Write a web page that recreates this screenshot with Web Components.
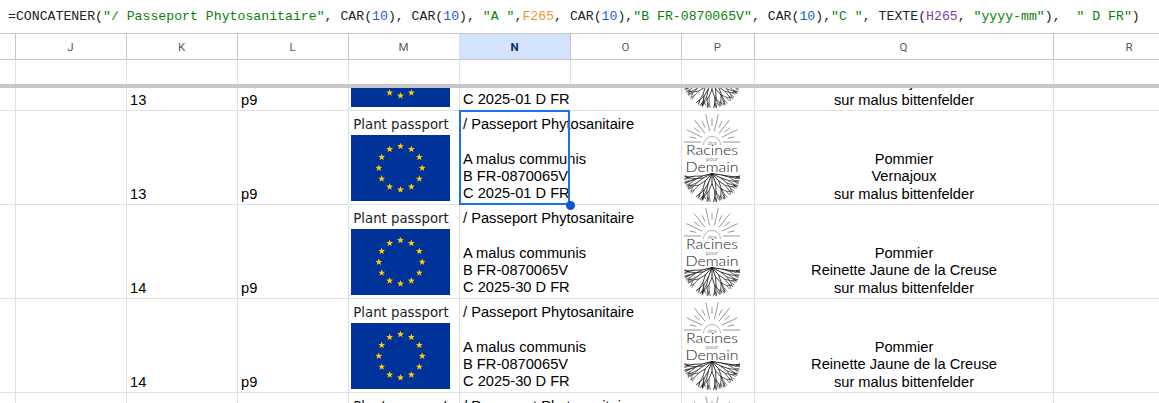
<!DOCTYPE html>
<html lang="fr">
<head>
<meta charset="utf-8">
<title>Feuille</title>
<style>
  html, body { margin: 0; height: 403px; overflow: hidden; background: #fff; }
</style>
</head>
<body>
<sheet-app></sheet-app>

<script>
const COLS = '15px 111px 111px 111px 111px 111px 111px 73px 299px 152px';
const LINE = '#e1e1e1';

// barre de formule
class FormulaBar extends HTMLElement {
    constructor() {
        super();
        this.attachShadow({mode: 'open'}).innerHTML = `
        <style>
        :host {
            display: flex;
            align-items: center;
            height: 33px;
            padding: 0 0 0 8px;
            border-bottom: 1px solid #c7c7c7;
            font: 13.2px "Liberation Mono", monospace;
            color: #202124;
            white-space: pre;
            overflow: hidden;
        }
        .s { color: #0a7f0a; }
        .n { color: #1a5fd0; }
        .o { color: #f6962b; }
        .p { color: #7e3f98; }
        </style>
        <span>=CONCATENER(<span class="s">"/ Passeport Phytosanitaire"</span>, CAR(<span class="n">10</span>), CAR(<span class="n">10</span>), <span class="s">"A "</span>,<span class="o">F265</span>, CAR(<span class="n">10</span>),<span class="s">"B FR-0870065V"</span>, CAR(<span class="n">10</span>),<span class="s">"C "</span>, TEXTE(<span class="p">H265</span>, <span class="s">"yyyy-mm"</span>),  <span class="s">" D FR"</span>)</span>
        `;
    }
}

// en-tête des colonnes + ligne figée vide + barre de gel
class SheetHeader extends HTMLElement {
    constructor() {
        super();
        const letters = ['', 'J', 'K', 'L', 'M', 'N', 'O', 'P', 'Q', 'R'];
        const heads = letters.map(l => `<div class="h ${l === 'N' ? 'sel' : ''}">${l}</div>`).join('');
        const blanks = letters.map(() => '<div class="b"></div>').join('');
        this.attachShadow({mode: 'open'}).innerHTML = `
        <style>
        :host { display: block; }
        .g { display: grid; grid-template-columns: ${COLS}; }
        .h {
            height: 24px;
            padding-top: 1px;
            display: flex;
            align-items: center;
            justify-content: center;
            border-right: 1px solid #c7c7c7;
            border-bottom: 1px solid #c7c7c7;
            margin-right: -1px;
            font: 11.5px Roboto, "Liberation Sans", sans-serif;
            color: #575b5f;
        }
        .h.sel { background: #d3e3fd; color: #0b2c5f; font-weight: 700; }
        .b {
            height: 24px;
            border-right: 1px solid ${LINE};
            margin-right: -1px;
        }
        .freeze { height: 4px; background: #c7c7c7; }
        </style>
        <div class="g">${heads}</div>
        <div class="g">${blanks}</div>
        <div class="freeze"></div>
        `;
    }
}

class EuFlag extends HTMLElement {
    constructor() {
        super();
        let stars = '';
        for (let i = 0; i < 12; i++) {
            const a = i * Math.PI / 6;
            const cx = 49.5 + 21.7 * Math.sin(a);
            const cy = 33 - 21.7 * Math.cos(a);
            let pts = [];
            for (let j = 0; j < 10; j++) {
                const r = j % 2 ? 1.5 : 3.6;
                const t = j * Math.PI / 5;
                pts.push((cx + r * Math.sin(t)).toFixed(2) + ',' + (cy - r * Math.cos(t)).toFixed(2));
            }
            stars += `<polygon points="${pts.join(' ')}" fill="#ffcc00"/>`;
        }
        this.attachShadow({mode: 'open'}).innerHTML = `
        <style>:host { display: block; width: 99px; height: 66px; } svg { display: block; }</style>
        <svg width="99" height="66" viewBox="0 0 99 66"><rect width="99" height="66" fill="#003399"/>${stars}</svg>
        `;
    }
}

// logo : soleil en haut, racines en bas, texte au milieu
class RacinesLogo extends HTMLElement {
    constructor() {
        super();
        let rays = '';
        const cx = 28, cy = 29;
        for (let i = 0; i <= 14; i++) {
            const a = -Math.PI / 2 + (i - 7) * (Math.PI / 14);
            const r0 = 11 + (i % 2) * 5;
            const r1 = i % 2 ? 23 : 28.5;
            rays += `<line x1="${(cx + r0 * Math.cos(a)).toFixed(1)}" y1="${(cy + r0 * Math.sin(a)).toFixed(1)}" x2="${(cx + r1 * Math.cos(a)).toFixed(1)}" y2="${(cy + r1 * Math.sin(a)).toFixed(1)}"/>`;
        }

        // racines : chaque branche se divise, avec un petit aléa fixe
        let seed = 11;
        const rnd = () => {
            seed = (seed * 16807) % 2147483647;
            return seed / 2147483647;
        };
        let roots = '';
        const branch = (x, y, ang, len, depth) => {
            const ex = x + len * 1.05 * Math.cos(ang);
            let ey = y + len * 1.06 * Math.sin(ang);
            // rien au-dessus du mot Demain
            if (ey < 62) ey = 62 + rnd() * 4;
            const w = [0.55, 0.65, 0.8, 0.9][depth];
            roots += `<line x1="${x.toFixed(1)}" y1="${y.toFixed(1)}" x2="${ex.toFixed(1)}" y2="${ey.toFixed(1)}" stroke-width="${w}"/>`;
            if (depth > 0) {
                branch(ex, ey, ang - 0.12 - rnd() * 0.3, len * 0.8, depth - 1);
                branch(ex, ey, ang + 0.12 + rnd() * 0.3, len * 0.8, depth - 1);
            }
        };
        for (let i = 0; i <= 8; i++) {
            const a = 0.1 + (Math.PI - 0.2) * (i / 8);
            branch(28, 60.5, a, 9.3, 3);
        }

        this.attachShadow({mode: 'open'}).innerHTML = `
        <style>
        :host { display: block; width: 56px; height: 90px; }
        svg { display: block; overflow: hidden; }
        .rays line { stroke: #444; stroke-width: .55; }
        .roots line { stroke: #111; }
        text { font-family: Lato, "Open Sans", sans-serif; font-weight: 300; fill: #222; text-anchor: middle; }
        </style>
        <svg width="56" height="90" viewBox="0 0 56 90">
            <g class="rays">${rays}</g>
            <path d="M19.5 32a8.5 8.5 0 0 1 17 0" fill="#fff" stroke="#666" stroke-width=".5"/>
            <text x="28" y="32" font-size="6">des</text>
            <text x="28" y="42" font-size="14" textLength="52" lengthAdjust="spacingAndGlyphs">Racines</text>
            <text x="28" y="48" font-size="6">pour</text>
            <text x="28" y="58.5" font-size="14" textLength="53" lengthAdjust="spacingAndGlyphs">Demain</text>
            <g class="roots">${roots}</g>
        </svg>
        `;
    }
}

// une ligne de données (hauteur fixe 94px)
class SheetRow extends HTMLElement {
    constructor() {
        super();
        const lot = this.getAttribute('lot');
        const date = this.getAttribute('date');
        const name = this.getAttribute('name');
        this.attachShadow({mode: 'open'}).innerHTML = `
        <style>
        :host {
            display: grid;
            grid-template-columns: ${COLS};
            height: 94px;
            font: 14.67px/17.3px "Liberation Sans", Arial, sans-serif;
            color: #000;
            box-sizing: border-box;
            border-bottom: 1px solid ${LINE};
        }
        .c {
            border-right: 1px solid ${LINE};
            margin-right: -1px;
            min-width: 0;
            display: flex;
            flex-direction: column;
            justify-content: flex-end;
            padding: 0 3px 1px 4px;
        }
        .m { padding: 0 0 3px 3px; align-items: flex-start; }
        .pp {
            width: 98px;
            padding-left: 1px;
            margin-bottom: 1px;
            text-align: center;
            font: 13.3px/19px "DejaVu Sans", sans-serif;
            color: #222;
            white-space: nowrap;
        }
        .n {
            justify-content: flex-start;
            padding-top: 5px;
            white-space: pre;
            border-right: 0;
            margin-right: 0;
            overflow: visible;
        }
        .p { padding: 2px 0 0 3px; justify-content: flex-start; }
        .q { align-items: center; text-align: center; padding-bottom: 1px; }
        </style>
        <div class="c"></div>
        <div class="c"></div>
        <div class="c">${lot}</div>
        <div class="c">p9</div>
        <div class="c m"><div class="pp">Plant passport</div><eu-flag></eu-flag></div>
        <div class="c n">/ Passeport Phytosanitaire

A malus communis
B FR-0870065V
C ${date} D FR</div>
        <div class="c o"></div>
        <div class="c p"><racines-logo></racines-logo></div>
        <div class="c q"><div>Pommier</div><div>${name}</div><div>sur malus bittenfelder</div></div>
        <div class="c"></div>
        `;
    }
}

// cadre de sélection posé sur la cellule N
class CellSelection extends HTMLElement {
    constructor() {
        super();
        this.attachShadow({mode: 'open'}).innerHTML = `
        <style>
        :host {
            position: absolute;
            left: 459px;
            top: 22px;
            width: 111px;
            height: 95px;
            box-sizing: border-box;
            border: 2px solid #1a73e8;
            pointer-events: none;
        }
        .dot {
            position: absolute;
            right: -7px;
            bottom: -7px;
            width: 9px;
            height: 9px;
            border-radius: 50%;
            background: #0b57d0;
        }
        </style>
        <div class="dot"></div>
        `;
    }
}

class SheetApp extends HTMLElement {
    constructor() {
        super();
        this.attachShadow({mode: 'open'}).innerHTML = `
        <style>
        :host { display: block; width: 1159px; height: 403px; overflow: hidden; background: #fff; }
        .scroller { position: relative; height: 315px; overflow: hidden; }
        .scroller > sheet-row:first-of-type { margin-top: -71px; }
        </style>
        <formula-bar></formula-bar>
        <sheet-header></sheet-header>
        <div class="scroller">
            <sheet-row lot="13" date="2025-01" name="Vernajoux"></sheet-row>
            <sheet-row lot="13" date="2025-01" name="Vernajoux"></sheet-row>
            <sheet-row lot="14" date="2025-30" name="Reinette Jaune de la Creuse"></sheet-row>
            <sheet-row lot="14" date="2025-30" name="Reinette Jaune de la Creuse"></sheet-row>
            <sheet-row lot="15" date="2025-30" name="Reinette Jaune de la Creuse"></sheet-row>
            <cell-selection></cell-selection>
        </div>
        `;
    }
}

customElements.define('formula-bar', FormulaBar);
customElements.define('sheet-header', SheetHeader);
customElements.define('eu-flag', EuFlag);
customElements.define('racines-logo', RacinesLogo);
customElements.define('sheet-row', SheetRow);
customElements.define('cell-selection', CellSelection);
customElements.define('sheet-app', SheetApp);
</script>
</body>
</html>
